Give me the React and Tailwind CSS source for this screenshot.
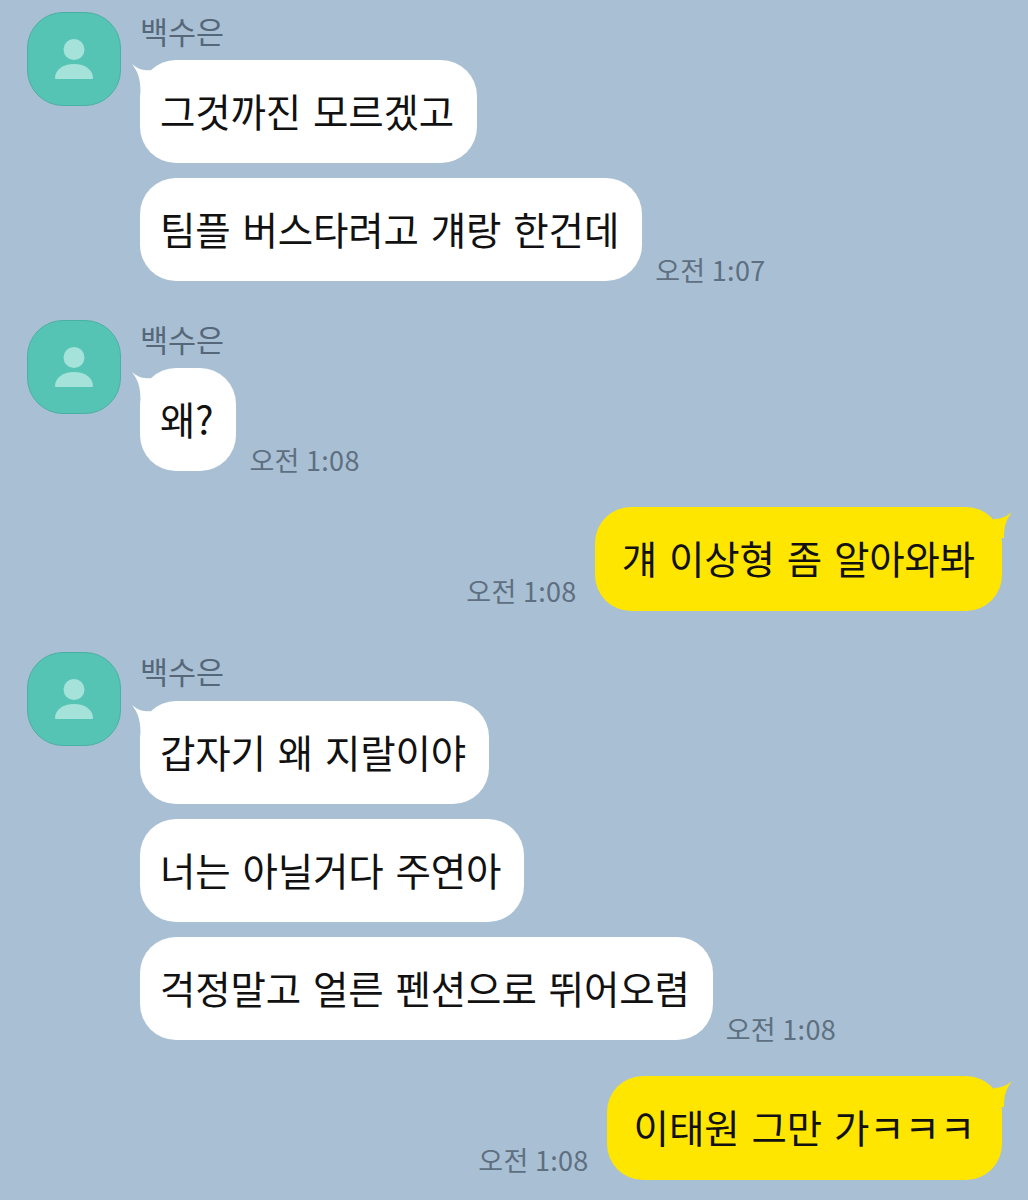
const font = { fontFamily: '"Noto Sans CJK KR", sans-serif' };

function Avatar() {
  return (
    <div className="w-[94px] h-[94px] rounded-[36px] bg-[#55c4b4] border border-[#4bb0a4] flex items-center justify-center shrink-0">
      <svg width="40" height="41" viewBox="0 0 40 41">
        <circle cx="20" cy="10.5" r="10.5" fill="#a5e2da" />
        <path d="M1 39 C1 31 9 25 20 25 C31 25 39 31 39 39 Q39 40 38 40 L2 40 Q1 40 1 39 Z" fill="#a5e2da" />
      </svg>
    </div>
  );
}

function TailLeft() {
  return (
    <svg className="absolute left-[-8px] top-[4px]" width="32" height="26" viewBox="0 0 32 26">
      <path d="M0 0 C5 4 10 7 18 6 L28 26 L8.5 26 C8 14 6 8 0 0 Z" fill="#fff" />
    </svg>
  );
}

function TailRight() {
  return (
    <svg className="absolute right-[-10px] top-[5px]" width="32" height="26" viewBox="0 0 32 26">
      <path d="M32 0 C27 4 22 7 14 7 L4 26 L24 26 C24 14 26 8 32 0 Z" fill="#ffe600" />
    </svg>
  );
}

function Bubble({ children, tail, yellow }) {
  return (
    <div className={`relative rounded-[36px] flex items-center pb-[3px] text-[38.5px] tracking-[-0.15px] [word-spacing:3.5px] leading-none whitespace-nowrap text-[#111] ${yellow ? "h-[104px] bg-[#ffe600] pl-[27px] pr-[27px]" : "h-[103px] bg-white pl-5 pr-[23px]"}`}>
      {tail && (yellow ? <TailRight /> : <TailLeft />)}
      <span className="relative">{children}</span>
    </div>
  );
}

function Time({ children, outgoing }) {
  return (
    <div className={`text-[27px] tracking-[0.3px] leading-none text-[#5d6f80] whitespace-nowrap ${outgoing ? "mb-[7px]" : "mb-[-2px]"}`}>
      {children}
    </div>
  );
}

function Incoming({ messages, time, className, nameClass }) {
  return (
    <div className={`flex pl-[27px] gap-[19px] ${className}`}>
      <Avatar />
      <div className="flex flex-col">
        <div className={`text-[30.5px] leading-none pt-[4px] text-[#56677a] ${nameClass}`}>백수은</div>
        <div className="flex flex-col gap-[15px] items-start">
          {messages.map((m, i) => (
            <div key={m} className="flex items-end gap-[13px]">
              <Bubble tail={i === 0}>{m}</Bubble>
              {i === messages.length - 1 && <Time>{time}</Time>}
            </div>
          ))}
        </div>
      </div>
    </div>
  );
}

function Outgoing({ text, time, className }) {
  return (
    <div className={`flex justify-end items-end gap-[18px] pr-[26px] ${className}`}>
      <Time outgoing>{time}</Time>
      <Bubble yellow tail>{text}</Bubble>
    </div>
  );
}

export default function App() {
  return (
    <div style={font} className="w-[1028px] h-[1200px] overflow-hidden bg-[#a9bfd3] pt-[12px]">
      <Incoming nameClass="h-[48px]" messages={["그것까진 모르겠고", "팀플 버스타려고 걔랑 한건데"]} time="오전 1:07" />
      <Incoming nameClass="h-[48px]" className="mt-[39px]" messages={["왜?"]} time="오전 1:08" />
      <Outgoing className="mt-[36px]" text="걔 이상형 좀 알아와봐" time="오전 1:08" />
      <Incoming nameClass="h-[49px]" className="mt-[41px]" messages={["갑자기 왜 지랄이야", "너는 아닐거다 주연아", "걱정말고 얼른 펜션으로 뛰어오렴"]} time="오전 1:08" />
      <Outgoing className="mt-[36px]" text="이태원 그만 가ㅋㅋㅋ" time="오전 1:08" />
    </div>
  );
}
